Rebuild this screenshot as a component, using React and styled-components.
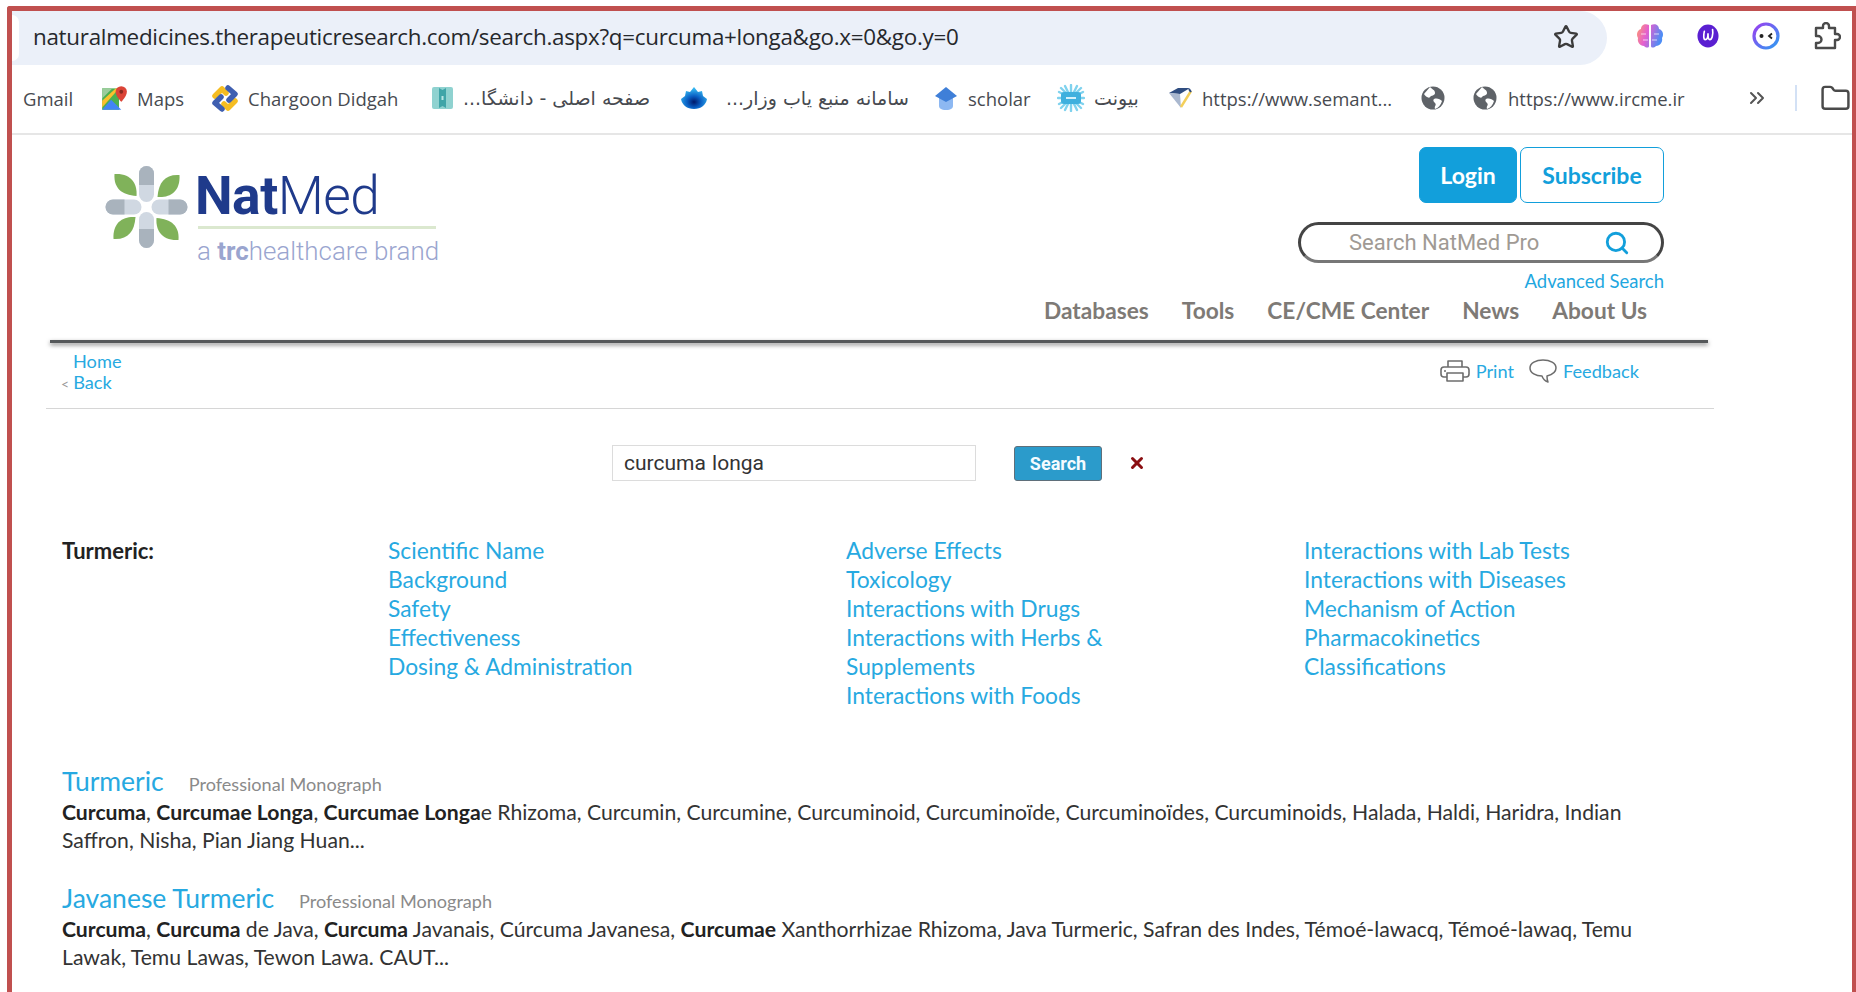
import React from "react";
import styled, { createGlobalStyle } from "styled-components";
import { Star, Search as SearchIcon, ChevronsRight, Folder, X } from "lucide-react";

const GlobalStyle = createGlobalStyle`
  html, body {
    margin: 0;
    padding: 0;
    background: #fff;
    overflow: hidden;
  }
  * {
    box-sizing: border-box;
  }
`;

const Shot = styled.div`
  width: 1856px;
  height: 992px;
  padding: 6px 0 0 7px;
  overflow: hidden;
  background: #fff;
`;

const Frame = styled.div`
  width: 1849px;
  height: 986px;
  border: solid #c0504f;
  border-width: 5px 4px 0 5px;
  border-top-left-radius: 3px;
  overflow: hidden;
`;

/* browser chrome */
const AddressRow = styled.div`
  height: 54px;
  display: flex;
  align-items: center;
`;

const AddressBar = styled.div`
  width: 1595px;
  height: 54px;
  padding: 0 28px 3px 0;
  display: flex;
  align-items: center;
  background: #ebf0f9;
  border-radius: 0 27px 27px 0;
  color: #26282c;
  font: 400 22.4px "Open Sans", sans-serif;
  letter-spacing: -0.28px;
`;

const BarCap = styled.div`
  width: 7px;
  height: 46px;
  margin: 3px 14px 0 0;
  background: #fff;
  border-radius: 0 20px 20px 0;
`;

const BarStar = styled(Star)`
  margin-left: auto;
`;

const Extensions = styled.div`
  flex: 1;
  display: flex;
  align-items: center;
  padding: 0 0 4px 29px;
  gap: 33px;
`;

const BookmarkRow = styled.div`
  height: 70px;
  display: flex;
  align-items: center;
  border-bottom: 2px solid #e6e6e6;
  padding: 0 0 2px 11px;
  color: #474a50;
  font: 400 18.5px "Open Sans", "DejaVu Sans", sans-serif;
`;

const Bookmark = styled.div`
  width: ${(p) => p.$w}px;
  flex: none;
  display: flex;
  align-items: center;
  gap: ${(p) => p.$gap ?? 9}px;
  white-space: nowrap;
  overflow: hidden;
`;

const PersianLabel = styled.span`
  font: 400 19px "DejaVu Sans", sans-serif;
  letter-spacing: -0.4px;
`;

const BarDivider = styled.div`
  width: 2px;
  height: 26px;
  margin-right: 23px;
  background: #d3e1f5;
`;

/* site header */
const Page = styled.div`
  font-family: Lato, sans-serif;
`;

const SiteHeader = styled.header`
  display: flex;
  justify-content: space-between;
  width: 1652px;
  height: 205px;
  padding: 12px 0 0 93px;
`;

const LogoBlock = styled.div`
  display: flex;
  gap: 10px;
  padding-top: 16px;
  align-items: flex-start;
`;

const LogoType = styled.div`
  width: 246px;
  padding-top: 4px;
`;

const LogoName = styled.div`
  margin-left: -3px;
  font: 300 53.3px/59px Roboto, sans-serif;
  color: #1f3a8b;
  letter-spacing: -0.5px;
  height: 59px;
  b {
    font-weight: 700;
  }
`;

const LogoRule = styled.div`
  width: 238px;
  height: 3px;
  background: #dbe8cf;
`;

const LogoTag = styled.div`
  margin: 6px 0 0 -1px;
  font: 300 25.9px/32px Roboto, sans-serif;
  color: #9aa5cf;
  white-space: nowrap;
  b {
    font-weight: 700;
  }
`;

const HeaderRight = styled.div`
  display: flex;
  flex-direction: column;
  align-items: flex-end;
`;

const AuthButtons = styled.div`
  display: flex;
  gap: 3px;
`;

const AuthButton = styled.button`
  height: 56px;
  width: ${(p) => p.$w}px;
  padding: 0;
  border: 1.5px solid #129fdb;
  border-radius: 7px;
  background: ${(p) => (p.$filled ? "#129fdb" : "#fff")};
  color: ${(p) => (p.$filled ? "#fff" : "#129fdb")};
  font: 700 23px Lato, sans-serif;
`;

const SiteSearch = styled.div`
  width: 366px;
  height: 41px;
  margin-top: 19px;
  padding: 0 31px 0 48px;
  display: flex;
  align-items: center;
  justify-content: space-between;
  border: 3px solid #444;
  border-bottom-color: #777;
  border-radius: 21px;
  color: #a09a94;
  font: 400 22px Roboto, sans-serif;
`;

const AdvancedLink = styled.a`
  margin-top: 6px;
  color: #1fa7e0;
  font-size: 18.5px;
  line-height: 24px;
`;

const NavBar = styled.nav`
  display: flex;
  gap: 33px;
  margin: 2px 17px 0 0;
  color: #7e7a76;
  font-size: 22.7px;
  font-weight: 700;
  line-height: 32px;
`;

const ShadowRule = styled.div`
  width: 1658px;
  height: 3px;
  margin-left: 38px;
  background: #55585a;
  box-shadow: 0 2px 4px rgba(0, 0, 0, 0.5);
`;

/* breadcrumb strip */
const Crumbs = styled.div`
  width: 1668px;
  height: 66px;
  margin-left: 34px;
  padding: 8px 75px 0 13px;
  display: flex;
  justify-content: space-between;
  border-bottom: 1.5px solid #d6d6d6;
  font-size: 18.2px;
  line-height: 21px;
`;

const CrumbLine = styled.div`
  color: #999;
  padding-left: ${(p) => (p.$indent ? 14 : 2)}px;
  a {
    color: #27a9e1;
  }
  span {
    font-size: 14px;
    margin-right: 4px;
  }
`;

const PageTools = styled.div`
  display: flex;
  gap: 15px;
  padding-top: 8px;
  color: #27a9e1;
`;

const ToolLink = styled.a`
  display: flex;
  align-items: center;
  gap: 6px;
  height: 24px;
`;

/* search form */
const SearchForm = styled.div`
  display: flex;
  align-items: center;
  margin: 36px 0 0 600px;
  height: 36px;
`;

const QueryInput = styled.div`
  width: 364px;
  height: 36px;
  padding-left: 11px;
  display: flex;
  align-items: center;
  border: 1.5px solid #dcdcdc;
  color: #333;
  font: 400 21px Roboto, sans-serif;
  word-spacing: 1px;
`;

const SearchButton = styled.button`
  width: 88px;
  height: 35px;
  margin-left: 38px;
  padding: 0;
  border: 1px solid #5f6f7a;
  border-radius: 3px;
  background: #2b9bcb;
  color: #f4fbff;
  font: 700 18px Roboto, sans-serif;
`;

const ClearIcon = styled(X)`
  margin-left: 26px;
  color: #8b0f12;
`;

/* topic links */
const TopicGrid = styled.div`
  display: grid;
  grid-template-columns: 326px 458px 458px 1fr;
  margin: 55px 0 0 50px;
  font-size: 22.8px;
  line-height: 29px;
`;

const TopicLabel = styled.div`
  color: #222;
  font-size: 22px;
  font-weight: 700;
`;

const TopicColumn = styled.ul`
  margin: 0;
  padding: 0;
  list-style: none;
  color: #27a9e1;
`;

const TopicLink = styled.li`
  width: 270px;
`;

/* monograph results */
const Results = styled.div`
  margin: 55px 0 0 50px;
  width: 1600px;
`;

const Result = styled.article`
  margin-bottom: 28px;
`;

const ResultHead = styled.div`
  display: flex;
  align-items: baseline;
  gap: 25px;
  height: 34px;
  line-height: 32px;
`;

const ResultTitle = styled.a`
  color: #27a9e1;
  font-size: 26.5px;
`;

const ResultKind = styled.span`
  color: #8a8a8a;
  font-size: 18.1px;
`;

const ResultText = styled.p`
  margin: 0;
  color: #333;
  font-size: 21.2px;
  line-height: 27.5px;
  b {
    color: #222;
    font-weight: 700;
  }
`;

const MapsIcon = () => (
  <svg width="27" height="27" viewBox="0 0 24 24">
    <path d="M1 3h15v19H1z" fill="#4caf50" />
    <path d="M1 3h9L1 12z" fill="#9ccc9c" />
    <path d="M1 22l8-9 9 9z" fill="#4285f4" />
    <path d="M1 14L13 3h3L1 20z" fill="#fbc02d" />
    <path d="M18 1a5 5 0 0 1 5 5c0 4-5 9-5 9s-5-5-5-9a5 5 0 0 1 5-5z" fill="#db4437" />
    <circle cx="18" cy="6" r="1.7" fill="#8a2a20" />
  </svg>
);

const ChargoonIcon = () => (
  <svg width="28" height="29" viewBox="0 0 28 29" fill="none" strokeWidth="5.5" strokeLinejoin="round" strokeLinecap="round">
    <path d="M4 12l7-7 4 4" stroke="#f5bd22" />
    <path d="M24 17l-7 7-4-4" stroke="#f5bd22" />
    <path d="M17 4l7 6-6 6" stroke="#3f5fb0" />
    <path d="M11 25l-7-6 6-6" stroke="#3f5fb0" />
  </svg>
);

const BookIcon = () => (
  <svg width="23" height="26" viewBox="0 0 23 26">
    <rect x="1" y="2" width="21" height="22" rx="2" fill="#8fd2d0" />
    <path d="M8 3l3.5 2L15 3v20l-3.5-2L8 23z" fill="#3fa5a8" />
    <rect x="10.5" y="11" width="2" height="4" fill="#b9e6e4" />
  </svg>
);

const LotusIcon = () => (
  <svg width="26" height="24" viewBox="0 0 26 24">
    <defs>
      <radialGradient id="lotusFill" cx="0.5" cy="0.68" r="0.6">
        <stop offset="0" stopColor="#00186a" />
        <stop offset="0.45" stopColor="#0a5fc4" />
        <stop offset="1" stopColor="#35b6f0" />
      </radialGradient>
    </defs>
    <path d="M13 1l4 5 4-1 1 5 4 3c-1 6-6 10-13 10S1 19 0 13l4-3 1-5 4 1z" fill="url(#lotusFill)" />
  </svg>
);

const ScholarIcon = () => (
  <svg width="26" height="26" viewBox="0 0 26 26">
    <path d="M6 13h14v8c0 2-2 4-7 4s-7-2-7-4z" fill="#8db8f2" />
    <path d="M13 2l11 9-11 6L2 11z" fill="#3f7fd8" />
  </svg>
);

const SnowIcon = () => (
  <svg width="28" height="28" viewBox="0 0 28 28">
    <g stroke="#7fd2ee" strokeWidth="2.4" strokeLinecap="round">
      <path d="M14 1v26M1 14h26M4 4l20 20M24 4L4 24M8 2l12 24M20 2L8 26M2 8l24 12M26 8L2 20" />
    </g>
    <rect x="4" y="8" width="20" height="12" rx="3" fill="#3fb0de" />
    <path d="M9 14h10" stroke="#d4f1fb" strokeWidth="2" />
  </svg>
);

const GemIcon = () => (
  <svg width="26" height="26" viewBox="0 0 26 26" fill="none">
    <path d="M2 8L11 3h12l-10 6z" fill="#2f4d80" />
    <path d="M2 8l11 1 1 14z" fill="#aab8cf" />
    <path d="M14 22L24 6" stroke="#f4cf5a" strokeWidth="2.4" />
    <path d="M22 4l2 3" stroke="#2f4d80" strokeWidth="2" />
  </svg>
);

const GlobeIcon = () => (
  <svg width="24" height="24" viewBox="0 0 24 24">
    <circle cx="12" cy="12" r="11.5" fill="#5f6368" />
    <path d="M9 1c3 3 5 3 5 6s-4 2-5 4-5-1-6-3zM13 13c3-1 6 0 8 2-1 4-4 7-7 8-1-3 2-4 0-6s-2-3-1-4z" fill="#fff" />
  </svg>
);

const BrainIcon = () => (
  <svg width="28" height="27" viewBox="0 0 28 27">
    <defs>
      <linearGradient id="brainFill" x1="0" x2="1" y1="0" y2="0.3">
        <stop offset="0" stopColor="#ff9a6c" />
        <stop offset="0.45" stopColor="#e45fd0" />
        <stop offset="1" stopColor="#4d8df5" />
      </linearGradient>
    </defs>
    <path d="M13 2c-4-2-8 0-8 4-4 1-5 6-3 9-1 4 2 8 6 8 2 2 5 2 5 0zM15 2c4-2 8 0 8 4 4 1 5 6 3 9 1 4-2 8-6 8-2 2-5 2-5 0z" fill="url(#brainFill)" />
    <path d="M5 11h5M18 11h5M7 17h5M16 17h5" stroke="#fff" strokeWidth="1.2" opacity="0.7" />
  </svg>
);

const WriterIcon = () => (
  <svg width="22" height="24" viewBox="0 0 24 26" fill="none">
    <ellipse cx="12" cy="13" rx="11.5" ry="12.5" fill="#5a1fd1" />
    <path d="M8 8c-1 4-1 9 1 9s3-4 3-7c0 3 0 7 2 7s4-5 3-11" stroke="#fff" strokeWidth="1.8" strokeLinecap="round" />
  </svg>
);

const FaceIcon = () => (
  <svg width="28" height="28" viewBox="0 0 28 28" fill="none">
    <defs>
      <linearGradient id="faceRing" x1="0" x2="1" y1="0" y2="1">
        <stop offset="0" stopColor="#9a3ff0" />
        <stop offset="1" stopColor="#2e9bf2" />
      </linearGradient>
    </defs>
    <circle cx="14" cy="14" r="12" stroke="url(#faceRing)" strokeWidth="3.2" />
    <circle cx="9.5" cy="14" r="2" fill="#222" />
    <path d="M20 11.5L17 14l3 2.5" stroke="#222" strokeWidth="1.8" />
  </svg>
);

const PuzzleIcon = () => (
  <svg width="28" height="28" viewBox="0 0 28 28" fill="none" stroke="#4a4a4a" strokeWidth="2.4" strokeLinejoin="round">
    <path d="M3 6h7V4a3 3 0 0 1 6 0v2h6v6h2a3 3 0 0 1 0 6h-2v8H3v-5h2a3 3 0 0 0 0-7H3z" />
  </svg>
);

const PrintGlyph = () => (
  <svg width="30" height="24" viewBox="0 0 30 24" fill="none" stroke="#6d6d6d" strokeWidth="1.6" strokeLinejoin="round">
    <path d="M8 8V2h14v6" />
    <rect x="1" y="8" width="28" height="10" rx="3" />
    <path d="M7 14v8h16v-8z" fill="#fff" />
    <path d="M4 12h2" />
  </svg>
);

const BubbleGlyph = () => (
  <svg width="28" height="24" viewBox="0 0 28 24" fill="none" stroke="#6d6d6d" strokeWidth="1.5" strokeLinejoin="round">
    <path d="M14 1c7 0 13 3 13 8s-5 7-9 8c0 2 0 4 1 6-3-1-5-3-6-6C7 17 1 14 1 9s6-8 13-8z" />
  </svg>
);

const NatMedMark = () => (
  <svg width="83" height="88" viewBox="-41.5 -44 83 88">
    {[0, 90, 180, 270].map((angle) => (
      <g key={angle} transform={`rotate(${angle})`}>
        <rect x="-7.5" y="-41" width="15" height="36" rx="7.5" fill="#d0d8e2" />
        <path d="M-7.5 -22v-11.5a7.5 7.5 0 0 1 15 0V-22z" fill="#a9b3bd" />
        <path d="M-32 -33C-15 -34 -9 -23 -10 -11C-25 -12 -33 -19 -32 -33Z" fill="#80b25a" />
      </g>
    ))}
  </svg>
);

const topics = [
  ["Scientific Name", "Background", "Safety", "Effectiveness", "Dosing & Administration"],
  ["Adverse Effects", "Toxicology", "Interactions with Drugs", "Interactions with Herbs & Supplements", "Interactions with Foods"],
  ["Interactions with Lab Tests", "Interactions with Diseases", "Mechanism of Action", "Pharmacokinetics", "Classifications"],
];

const navItems = ["Databases", "Tools", "CE/CME Center", "News", "About Us"];

export default function App() {
  return (
    <Shot>
      <GlobalStyle />
      <Frame>
        <AddressRow>
          <AddressBar>
            <BarCap />
            <span>naturalmedicines.therapeuticresearch.com/search.aspx?q=curcuma+longa&amp;go.x=0&amp;go.y=0</span>
            <BarStar size={26} color="#3c3c3c" strokeWidth={2.2} />
          </AddressBar>
          <Extensions>
            <BrainIcon />
            <WriterIcon />
            <FaceIcon />
            <PuzzleIcon />
          </Extensions>
        </AddressRow>

        <BookmarkRow>
          <Bookmark $w={78}>Gmail</Bookmark>
          <Bookmark $w={110}><MapsIcon />Maps</Bookmark>
          <Bookmark $w={220}><ChargoonIcon />Chargoon Didgah</Bookmark>
          <Bookmark $w={250}><BookIcon /><PersianLabel dir="rtl">صفحه اصلی - دانشگا...</PersianLabel></Bookmark>
          <Bookmark $w={252} $gap={19}><LotusIcon /><PersianLabel dir="rtl">سامانه منبع یاب وزار...</PersianLabel></Bookmark>
          <Bookmark $w={124}><ScholarIcon />scholar</Bookmark>
          <Bookmark $w={110}><SnowIcon /><PersianLabel dir="rtl">بیونت</PersianLabel></Bookmark>
          <Bookmark $w={254}><GemIcon />https://www.semant...</Bookmark>
          <Bookmark $w={52}><GlobeIcon /></Bookmark>
          <Bookmark $w={272} $gap={11}><GlobeIcon />https://www.ircme.ir</Bookmark>
          <Bookmark $w={50}><ChevronsRight size={24} color="#555" /></Bookmark>
          <BarDivider />
          <Folder size={31} color="#4a4a4a" strokeWidth={1.9} />
        </BookmarkRow>

        <Page>
          <SiteHeader>
            <LogoBlock>
              <NatMedMark />
              <LogoType>
                <LogoName><b>Nat</b>Med</LogoName>
                <LogoRule />
                <LogoTag>a <b>trc</b>healthcare brand</LogoTag>
              </LogoType>
            </LogoBlock>
            <HeaderRight>
              <AuthButtons>
                <AuthButton $filled $w={98}>Login</AuthButton>
                <AuthButton $w={144}>Subscribe</AuthButton>
              </AuthButtons>
              <SiteSearch>
                <span>Search NatMed Pro</span>
                <SearchIcon size={26} color="#129fdb" strokeWidth={2.6} />
              </SiteSearch>
              <AdvancedLink>Advanced Search</AdvancedLink>
              <NavBar>
                {navItems.map((item) => (
                  <span key={item}>{item}</span>
                ))}
              </NavBar>
            </HeaderRight>
          </SiteHeader>
          <ShadowRule />

          <Crumbs>
            <div>
              <CrumbLine $indent><a>Home</a></CrumbLine>
              <CrumbLine><span>&lt;</span><a>Back</a></CrumbLine>
            </div>
            <PageTools>
              <ToolLink><PrintGlyph />Print</ToolLink>
              <ToolLink><BubbleGlyph />Feedback</ToolLink>
            </PageTools>
          </Crumbs>

          <SearchForm>
            <QueryInput>curcuma longa</QueryInput>
            <SearchButton>Search</SearchButton>
            <ClearIcon size={18} strokeWidth={4} />
          </SearchForm>

          <TopicGrid>
            <TopicLabel>Turmeric:</TopicLabel>
            {topics.map((column) => (
              <TopicColumn key={column[0]}>
                {column.map((topic) => (
                  <TopicLink key={topic}>{topic}</TopicLink>
                ))}
              </TopicColumn>
            ))}
          </TopicGrid>

          <Results>
            <Result>
              <ResultHead>
                <ResultTitle>Turmeric</ResultTitle>
                <ResultKind>Professional Monograph</ResultKind>
              </ResultHead>
              <ResultText>
                <b>Curcuma</b>, <b>Curcumae Longa</b>, <b>Curcumae Longa</b>e Rhizoma, Curcumin, Curcumine, Curcuminoid, Curcuminoïde, Curcuminoïdes, Curcuminoids, Halada, Haldi, Haridra, Indian Saffron, Nisha, Pian Jiang Huan...
              </ResultText>
            </Result>
            <Result>
              <ResultHead>
                <ResultTitle>Javanese Turmeric</ResultTitle>
                <ResultKind>Professional Monograph</ResultKind>
              </ResultHead>
              <ResultText>
                <b>Curcuma</b>, <b>Curcuma</b> de Java, <b>Curcuma</b> Javanais, Cúrcuma Javanesa, <b>Curcumae</b> Xanthorrhizae Rhizoma, Java Turmeric, Safran des Indes, Témoé-lawacq, Témoé-lawaq, Temu Lawak, Temu Lawas, Tewon Lawa. CAUT...
              </ResultText>
            </Result>
          </Results>
        </Page>
      </Frame>
    </Shot>
  );
}
